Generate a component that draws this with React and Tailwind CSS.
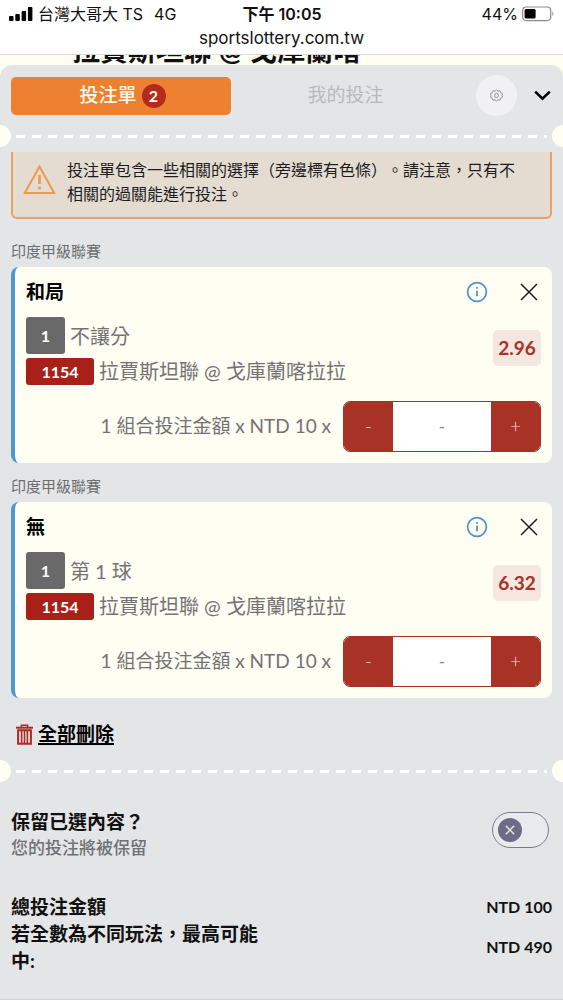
import { useState } from "react";

const bets = [
  { id: "draw", league: "印度甲級聯賽", pick: "和局", market: "不讓分", odds: "2.96" },
  { id: "none", league: "印度甲級聯賽", pick: "無", market: "第 1 球", odds: "6.32" },
];

function StatusBar() {
  return (
    <header className="h-[54px] shrink-0 bg-white text-[17px] text-[#111]">
      <div className="grid h-7 grid-cols-3 items-center pl-[9px] pr-2">
        <div className="flex items-center gap-[5px] whitespace-nowrap">
          <svg width="24" height="16" viewBox="0 0 24 16" fill="#000" aria-hidden="true">
            <rect x="0" y="10" width="4.5" height="5" rx="1" />
            <rect x="6.3" y="8" width="4.5" height="7" rx="1" />
            <rect x="12.6" y="5" width="4.5" height="10" rx="1" />
            <rect x="18.9" y="1" width="4.5" height="14" rx="1" />
          </svg>
          <span className="text-base">台灣大哥大 TS</span>
          <span className="pl-[6px] text-base">4G</span>
        </div>
        <div className="whitespace-nowrap text-center text-base font-semibold">下午 10:05</div>
        <div className="flex items-center justify-end gap-1">
          <span className="text-base">44%</span>
          <svg width="33" height="16" viewBox="0 0 33 16" aria-hidden="true">
            <rect x="0.7" y="1" width="28" height="13.6" rx="3.5" fill="none" stroke="#8b8b8b" strokeWidth="1.2" />
            <rect x="2.6" y="3" width="11" height="9.6" rx="1.5" fill="#000" />
            <path d="M30.4 5.6c1.4.6 1.4 3.8 0 4.4z" fill="#8b8b8b" />
          </svg>
        </div>
      </div>
      <div className="text-center text-[17px] leading-5">sportslottery.com.tw</div>
    </header>
  );
}

function Perforation() {
  return (
    <div className="flex h-[22px] items-center justify-between overflow-hidden" aria-hidden="true">
      <span className="-ml-[11px] size-[22px] shrink-0 rounded-full bg-[#fefef3]" />
      <span className="mx-[5px] h-[3px] flex-1 bg-[repeating-linear-gradient(90deg,#ffffff_0_9px,transparent_9px_16px)]" />
      <span className="-mr-[11px] size-[22px] shrink-0 rounded-full bg-[#fefef3]" />
    </div>
  );
}

function GearIcon() {
  return (
    <svg width="13" height="13" viewBox="0 0 24 24" fill="none" stroke="#8d8e93" strokeWidth="1.8" strokeLinejoin="round" aria-hidden="true">
      <path d="M12 1.5l2.7 2.4 3.6-.6 1.2 3.4 3.4 1.4-.7 3.9.7 3.8-3.4 1.4-1.2 3.4-3.6-.5L12 22.500l-2.700-2.400-3.600.5-1.200-3.400-3.400-1.400.7-3.800-.7-3.900 3.400-1.400 1.200-3.400 3.600.6z" />
      <circle cx="12" cy="12" r="3.600" />
    </svg>
  );
}

function BetCard({ bet }) {
  const [units, setUnits] = useState("");
  const count = Number(units) || 0;
  const inputId = `units-${bet.id}`;
  return (
    <section>
      <h2 className="h-[31px] text-[15px] leading-[30px] text-[#6d6e70]">{bet.league}</h2>
      <article className="rounded-lg border-l-4 border-[#4f97cf] bg-[#fefef3] pb-[11px] pl-[11px] pr-[11px] pt-3">
        <div className="flex h-[26px] items-center">
          <h3 className="flex-1 text-[19px] font-bold text-black">{bet.pick}</h3>
          <button type="button" aria-label="詳情" className="mr-8">
            <svg width="22" height="22" viewBox="0 0 22 22" fill="none" stroke="#4f93cb" aria-hidden="true">
              <circle cx="11" cy="11" r="9.400" strokeWidth="1.700" />
              <path d="M11 9.800v5.400" strokeWidth="1.800" />
              <path d="M11 6v1.800" strokeWidth="1.800" />
            </svg>
          </button>
          <button type="button" aria-label="移除" className="pr-[3px]">
            <svg width="18" height="18" viewBox="0 0 18 18" stroke="#1b1b1b" strokeWidth="1.500" aria-hidden="true">
              <path d="M1 1l16 16M17 1L1 17" />
            </svg>
          </button>
        </div>
        <div className="flex items-start justify-between pt-3">
          <div className="flex flex-col gap-1 text-[20px] text-[#737373]">
            <div className="flex items-center gap-[5px]">
              <span className="grid h-[37px] w-[39px] place-items-center rounded-[3px] bg-[#696969] text-base font-bold text-white">1</span>
              <span className="leading-7">{bet.market}</span>
            </div>
            <div className="flex items-center gap-[5px]">
              <span className="grid h-[27px] w-[68px] place-items-center rounded-[3px] bg-[#a82017] text-base font-bold text-white">1154</span>
              <span className="leading-[27px]">拉賈斯坦聯 @ 戈庫蘭喀拉拉</span>
            </div>
          </div>
          <span className="mt-[13px] grid h-9 w-12 shrink-0 place-items-center rounded-[5px] bg-[#f5e6df] text-[19px] font-bold text-[#a93226]">
            {bet.odds}
          </span>
        </div>
        <div className="flex items-center justify-end gap-3 pt-4">
          <label htmlFor={inputId} className="text-[19px] text-[#737373]">1 組合投注金額 x NTD 10 x</label>
          <div className="flex h-[51px] w-[198px] overflow-hidden rounded-[7px] border border-[#a53024]">
            <button
              type="button"
              aria-label="減少"
              onClick={() => setUnits(count > 1 ? String(count - 1) : "")}
              className="w-[49px] bg-[#a93226] text-[19px] font-light text-[#f6dcd4]"
            >
              -
            </button>
            <input
              id={inputId}
              inputMode="numeric"
              placeholder="-"
              value={units}
              onChange={(e) => setUnits(e.target.value)}
              className="min-w-0 flex-1 bg-white text-center text-[17px] text-[#555] outline-none placeholder:text-[#8a8a8a]"
            />
            <button
              type="button"
              aria-label="增加"
              onClick={() => setUnits(String(count + 1))}
              className="w-[49px] bg-[#a93226] text-[19px] font-light text-[#f6dcd4]"
            >
              +
            </button>
          </div>
        </div>
      </article>
    </section>
  );
}

function TrashIcon() {
  return (
    <svg width="17" height="21" viewBox="0 0 17 21" fill="none" stroke="#ac2b22" aria-hidden="true">
      <path d="M0 3.700h17" strokeWidth="2" />
      <path d="M5.300 3V1.200h6.400V3" strokeWidth="1.400" />
      <path d="M2.100 6.200h12.800v13.600H2.100z" strokeWidth="2" />
      <path d="M5.600 7v12M8.500 7v12M11.400 7v12" strokeWidth="1.600" />
    </svg>
  );
}

export default function App() {
  const [keep, setKeep] = useState(false);
  return (
    <div className="flex min-h-screen flex-col bg-[#fefef3] font-[Lato,'Noto_Sans_CJK_TC',sans-serif]">
      <div className="font-[Inter,'Noto_Sans_CJK_TC',sans-serif]">
        <StatusBar />
      </div>
      <div className="flex h-[11px] shrink-0 items-end overflow-hidden border-t border-[#dcdcd6] pl-[72px]">
        <h1 className="whitespace-nowrap text-[28px] font-bold leading-[30px] text-[#111]">拉賈斯坦聯 @ 戈庫蘭喀</h1>
      </div>

      <main className="flex-1 rounded-t-xl border-b border-[#d2d2d4] bg-[#e4e5e7]">
        <nav className="flex items-center px-[11px] pb-[9px] pt-[10px]">
          <button type="button" className="flex h-[38px] w-[220px] items-center justify-center gap-[5px] rounded-[5px] bg-[#ee8131] pl-[3px] text-[19px] font-medium text-[#fdfaec]">
            投注單
            <span className="grid size-6 place-items-center rounded-full bg-[#b32b1e] text-base font-bold">2</span>
          </button>
          <button type="button" className="flex-1 pr-4 text-center text-[19px] text-[#b9babd]">我的投注</button>
          <button type="button" aria-label="設定" className="grid size-[41px] place-items-center rounded-full bg-[#f1f1f3]">
            <GearIcon />
          </button>
          <button type="button" aria-label="收合" className="ml-[17px] mr-[1px]">
            <svg width="17" height="11" viewBox="0 0 17 11" fill="none" stroke="#000" strokeWidth="2.600" aria-hidden="true">
              <path d="M1.200 1.600L8.500 8.700l7.300-7.100" />
            </svg>
          </button>
        </nav>
        <Perforation />

        <div className="px-[11px] pt-[5px]">
          <div role="alert" className="flex items-start gap-[11px] rounded-b-md border-2 border-t-0 border-[#e9a163] bg-[#e4dbd1] pb-[11px] pl-[10px] pr-5 pt-[6px] text-base leading-6 text-[#1c1c1c]">
            <svg className="mt-[6px] shrink-0" width="33" height="31" viewBox="0 0 33 31" fill="none" stroke="#ee9a4b" aria-hidden="true">
              <path d="M16.500 2.600L31.200 29H1.800z" strokeWidth="2" />
              <path d="M16.500 11v9" strokeWidth="2.600" />
              <path d="M16.500 22.500v2.800" strokeWidth="2.600" />
            </svg>
            <p className="[text-spacing-trim:space-all]">
              投注單包含一些相關的選擇（旁邊標有色條）。請注意，只有不相關的過關能進行投注。
            </p>
          </div>

          <div className="flex flex-col gap-2 pt-[17px]">
            {bets.map((bet) => (
              <BetCard key={bet.id} bet={bet} />
            ))}
          </div>

          <button type="button" className="mt-[22px] flex h-7 items-center gap-[5px] pl-[5px] text-[19px] font-bold text-black">
            <TrashIcon />
            <span className="underline decoration-2 underline-offset-2">全部刪除</span>
          </button>
        </div>

        <div className="pt-3">
          <Perforation />
        </div>

        <div className="flex items-center justify-between pl-[11px] pr-[14px] pt-[26px]">
          <label htmlFor="keep" className="flex flex-col">
            <span className="text-[19px] font-bold leading-7 text-[#111]">保留已選內容？</span>
            <span className="text-[17px] font-medium leading-6 text-[#707173]">您的投注將被保留</span>
          </label>
          <span className="relative mb-2 h-9 w-[57px]">
            <input
              id="keep"
              type="checkbox"
              role="switch"
              checked={keep}
              onChange={() => setKeep(!keep)}
              className="peer block h-9 w-[57px] appearance-none rounded-full border border-[#7c7a88] bg-[#e9eaed]"
            />
            <span className="pointer-events-none absolute left-[6px] top-[6px] grid size-6 place-items-center rounded-full bg-[#6e6b87] peer-checked:left-[27px]">
              <svg width="10" height="10" viewBox="0 0 10 10" stroke="#e6e5ec" strokeWidth="1.500" aria-hidden="true">
                <path d="M0.800 0.800l8.400 8.400M9.200 0.800L0.800 9.200" />
              </svg>
            </span>
          </span>
        </div>

        <dl className="px-[11px] pb-[22px] pt-[33px] text-[19px] leading-[27px] text-[#111]">
          <div className="flex items-center justify-between">
            <dt className="font-bold">總投注金額</dt>
            <dd className="text-base font-bold">NTD 100</dd>
          </div>
          <div className="flex items-center justify-between">
            <dt className="w-1/2 pr-5 font-bold">若全數為不同玩法，最高可能中:</dt>
            <dd className="text-base font-bold">NTD 490</dd>
          </div>
        </dl>
      </main>
    </div>
  );
}
